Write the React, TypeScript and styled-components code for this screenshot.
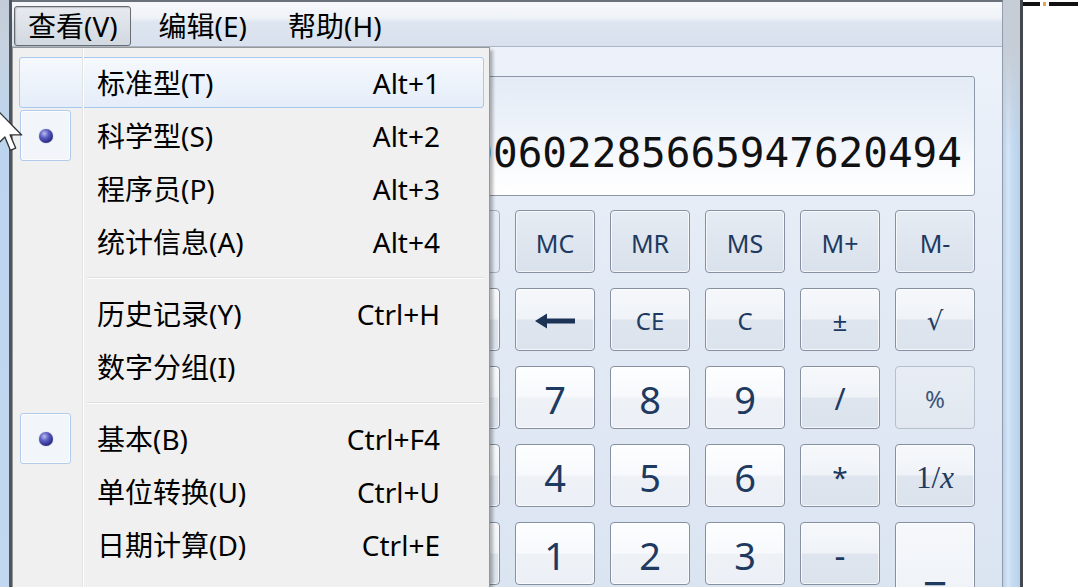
import React from "react";
import styled, { createGlobalStyle, css } from "styled-components";

const UI_FONT = `"Noto Sans", "Noto Sans CJK SC", sans-serif`;
const SERIF = `"Liberation Serif", "DejaVu Serif", serif`;
const MONO = `"DejaVu Sans Mono", "Liberation Mono", monospace`;
const SYMBOL = `"DejaVu Sans", "Noto Sans", sans-serif`;

const GlobalStyle = createGlobalStyle`
  html, body { margin: 0; padding: 0; background: #ffffff; overflow: hidden; }
  #root { width: 1078px; height: 587px; }
  * { box-sizing: border-box; }
`;

const Screen = styled.div`
  position: relative;
  width: 1078px;
  height: 587px;
  overflow: hidden;
  display: flex;
  align-items: stretch;
  font-family: ${UI_FONT};
`;

const FrameLeft = styled.div`
  flex: none;
  width: 12px;
  border-right: 3px solid #4f555d;
  background: linear-gradient(to bottom, #c3ccd8 0, #c6d2e0 46px, #bcd4ee 130px, #c1d8f0 100%);
`;

const Window = styled.div`
  flex: none;
  width: 991px;
  display: flex;
  flex-direction: column;
  border-top: 2px solid #6a717b;
  border-right: 1px solid #929dab;
`;

const MenuBar = styled.div`
  flex: none;
  height: 45px;
  display: flex;
  align-items: flex-start;
  gap: 14px;
  padding: 4px 0 0 2px;
  border-bottom: 1px solid #aab5c5;
  background: linear-gradient(to bottom, #f7f8fb 0%, #eff2f7 36%, #dde5f0 46%, #d9e1ee 100%);
`;

const MenuTitle = styled.div<{ $active?: boolean }>`
  height: 40px;
  display: flex;
  align-items: center;
  padding: 0 12px 2px 13px;
  font-size: 28px;
  color: #000;
  border: 1px solid transparent;
  border-radius: 3px;
  ${(p) =>
    p.$active &&
    css`
      border-color: #676c73;
      background: linear-gradient(to bottom, #e7eaef 0%, #dde2e9 50%, #d2d8e0 100%);
      box-shadow: inset 1px 1px 1px rgba(0, 0, 0, 0.18);
    `}
`;

const Body = styled.div`
  flex: 1;
  display: flex;
  flex-direction: column;
  gap: 14px;
  padding: 29px 27px 0 28px;
  background: linear-gradient(to bottom, #edf2fa 0%, #e2eaf5 40%, #d9e3f0 100%);
`;

const Display = styled.div`
  flex: none;
  height: 120px;
  display: flex;
  align-items: flex-end;
  justify-content: flex-end;
  overflow: hidden;
  padding: 0 12px 21px 12px;
  border: 1px solid #8c98a8;
  border-radius: 3px;
  background: linear-gradient(to bottom, #e4ebf5 0%, #eef3fa 45%, #fbfcfe 80%, #ffffff 100%);
`;

const DisplayValue = styled.div`
  flex: none;
  white-space: nowrap;
  font-family: ${MONO};
  font-size: 41px;
  line-height: 1;
  color: #111;
`;

const Keypad = styled.div`
  display: grid;
  grid-template-columns: repeat(10, 80px);
  grid-auto-rows: 63px;
  gap: 15px;
`;

const GroupBox = styled.div`
  grid-column: span 5;
  display: flex;
  align-items: center;
  justify-content: space-around;
  border: 1px solid #a6b2c3;
  border-radius: 4px;
  font-size: 24px;
  color: #000;
`;

type Variant = "mem" | "op" | "num" | "off";
type Face = "ui" | "serif" | "symbol";

const variants: Record<Variant, ReturnType<typeof css>> = {
  mem: css`
    background: linear-gradient(to bottom, #e6ecf4 0%, #dfe6ef 50%, #d9e1ec 100%);
  `,
  op: css`
    background: linear-gradient(to bottom, #f6f8fb 0%, #eff3f8 49%, #dee5ee 51%, #dbe3ed 100%);
  `,
  num: css`
    background: linear-gradient(to bottom, #fdfeff 0%, #f7f9fc 49%, #eef2f7 51%, #ecf0f6 100%);
  `,
  off: css`
    border-color: #b6c0cd;
    box-shadow: none;
    color: #3d5477;
    background: linear-gradient(to bottom, #e8edf4 0%, #e2e8f0 100%);
  `,
};

const faces: Record<Face, string> = { ui: UI_FONT, serif: SERIF, symbol: SYMBOL };

const Key = styled.div<{ $v: Variant; $size: number; $rows?: number; $cols?: number; $face?: Face; $lift?: number }>`
  display: flex;
  align-items: center;
  justify-content: center;
  padding-top: 3px;
  padding-bottom: ${(p) => p.$lift ?? 0}px;
  border: 1px solid #8690a0;
  border-radius: 4px;
  box-shadow: inset 0 0 0 1px rgba(255, 255, 255, 0.7);
  color: #1e3a60;
  font-family: ${(p) => faces[p.$face ?? "ui"]};
  font-size: ${(p) => p.$size}px;
  line-height: 1;
  white-space: nowrap;
  grid-row: span ${(p) => p.$rows ?? 1};
  grid-column: span ${(p) => p.$cols ?? 1};
  ${(p) => variants[p.$v]}
`;

const RightFrame = styled.div`
  flex: none;
  width: 20px;
  border-right: 3px solid #44484e;
  background:
    linear-gradient(to bottom, rgba(198, 205, 214, 1) 0, rgba(198, 205, 214, 1) 46px, rgba(198, 205, 214, 0) 150px),
    linear-gradient(to right, #b9d0ea 0%, #d6e6f7 30%, #c4dbf2 55%, #b8d1ec 100%);
`;

const Desktop = styled.div`
  flex: 1;
  display: flex;
  align-items: flex-start;
  gap: 3px;
  padding-top: 2px;
  background: #ffffff;
`;

const Dash = styled.div<{ $w: number; $tint?: string }>`
  flex: none;
  width: ${(p) => p.$w}px;
  height: 4px;
  background: ${(p) => p.$tint ?? "#111"};
`;

/* ---------- Dropdown (overlay) ---------- */

const DropMenu = styled.div`
  position: absolute;
  left: 12px;
  top: 47px;
  width: 478px;
  bottom: -30px;
  padding: 7px 5px 0 6px;
  background: #f0f0f0;
  border: 1px solid #979797;
  box-shadow: 3px 3px 3px rgba(0, 0, 0, 0.28);
  font-size: 28px;
  color: #000;
  z-index: 5;

  &::after {
    content: "";
    position: absolute;
    left: 69px;
    top: 0;
    bottom: 0;
    width: 1px;
    background: #e2e3e3;
    border-right: 1px solid #ffffff;
    pointer-events: none;
  }
`;

const MenuItem = styled.div<{ $hover?: boolean }>`
  height: 51px;
  margin: 2px 0 1px;
  display: grid;
  grid-template-columns: 51px 1fr auto;
  align-items: center;
  padding-right: 43px;
  border: 1px solid transparent;
  border-radius: 3px;
  ${(p) =>
    p.$hover &&
    css`
      border-color: #a9c8ee;
      background: linear-gradient(to bottom, #f6f9fd 0%, #edf3fb 50%, #e5edf9 100%);
    `}
`;

const CheckCell = styled.div<{ $checked?: boolean }>`
  align-self: stretch;
  margin: -1px 0;
  display: flex;
  align-items: center;
  justify-content: center;
  border: 1px solid transparent;
  border-radius: 3px;
  ${(p) =>
    p.$checked &&
    css`
      border-color: #b1cbec;
      background: #f2f6fb;
      box-shadow: inset 0 0 0 1px rgba(255, 255, 255, 0.8);
    `}
`;

const Bullet = styled.span`
  width: 14px;
  height: 14px;
  border-radius: 50%;
  background: radial-gradient(circle at 38% 32%, #b9bdf0 0%, #5a5cc0 35%, #2c2d8a 70%, #1c1c5c 100%);
  box-shadow: 0 0 1px rgba(20, 20, 80, 0.6);
`;

const ItemLabel = styled.span`
  padding-left: 26px;
  white-space: nowrap;
  line-height: 1;
`;

const Shortcut = styled.span`
  white-space: nowrap;
  line-height: 1;
`;

const Separator = styled.div`
  height: 18px;
  padding: 9px 0 0 68px;
`;

const SepLine = styled.div`
  height: 2px;
  border-top: 1px solid #dfdfdf;
  border-bottom: 1px solid #ffffff;
`;

const CursorSvg = styled.svg`
  position: absolute;
  left: -5px;
  top: 108px;
  z-index: 10;
`;

/* ---------- data ---------- */

type KeyDef = {
  label: React.ReactNode;
  v: Variant;
  size?: number;
  rows?: number;
  cols?: number;
  face?: Face;
  lift?: number;
};

const BackArrow = () => (
  <svg width="42" height="18" viewBox="0 0 42 18">
    <path d="M1 9 L13 1.5 L13 6.6 L41 6.6 L41 11.4 L13 11.4 L13 16.5 Z" fill="#1c3356" />
  </svg>
);

const keys: KeyDef[] = [
  { label: "MC", v: "mem", size: 25 },
  { label: "MR", v: "mem", size: 25 },
  { label: "MS", v: "mem", size: 25 },
  { label: "M+", v: "mem", size: 25 },
  { label: "M-", v: "mem", size: 25 },

  { label: "", v: "op", size: 24 },
  { label: "Inv", v: "op", size: 24 },
  { label: "ln", v: "op", size: 24 },
  { label: "(", v: "op", size: 24 },
  { label: ")", v: "op", size: 24 },
  { label: <BackArrow />, v: "op", size: 24 },
  { label: "CE", v: "op", size: 24 },
  { label: "C", v: "op", size: 24 },
  { label: "±", v: "op", size: 26 },
  { label: "√", v: "op", size: 26, face: "symbol" },

  { label: "Int", v: "op", size: 24 },
  { label: "sinh", v: "op", size: 24 },
  { label: "sin", v: "op", size: 24 },
  { label: "x²", v: "op", size: 24 },
  { label: "n!", v: "op", size: 24 },
  { label: "7", v: "num", size: 38 },
  { label: "8", v: "num", size: 38 },
  { label: "9", v: "num", size: 38 },
  { label: "/", v: "op", size: 30 },
  { label: "%", v: "off", size: 24 },

  { label: "dms", v: "op", size: 24 },
  { label: "cosh", v: "op", size: 24 },
  { label: "cos", v: "op", size: 24 },
  { label: "xʸ", v: "op", size: 24 },
  { label: "ʸ√x", v: "op", size: 24, face: "symbol" },
  { label: "4", v: "num", size: 38 },
  { label: "5", v: "num", size: 38 },
  { label: "6", v: "num", size: 38 },
  { label: "*", v: "op", size: 28 },
  {
    label: (
      <>
        1/<i>x</i>
      </>
    ),
    v: "op",
    size: 31,
    face: "serif",
  },

  { label: "π", v: "op", size: 24 },
  { label: "tanh", v: "op", size: 24 },
  { label: "tan", v: "op", size: 24 },
  { label: "x³", v: "op", size: 24 },
  { label: "∛x", v: "op", size: 24, face: "symbol" },
  { label: "1", v: "num", size: 38 },
  { label: "2", v: "num", size: 38 },
  { label: "3", v: "num", size: 38 },
  { label: "-", v: "op", size: 34 },
  { label: "=", v: "op", size: 44, rows: 2, lift: 14 },

  { label: "F-E", v: "op", size: 24 },
  { label: "Exp", v: "op", size: 24 },
  { label: "Mod", v: "op", size: 24 },
  { label: "log", v: "op", size: 24 },
  { label: "10ˣ", v: "op", size: 24 },
  { label: "0", v: "num", size: 38, cols: 2 },
  { label: ".", v: "num", size: 38 },
  { label: "+", v: "op", size: 30 },
];

type Entry =
  | { kind: "item"; label: string; shortcut?: string; checked?: boolean; hover?: boolean }
  | { kind: "sep" };

const menu: Entry[] = [
  { kind: "item", label: "标准型(T)", shortcut: "Alt+1", hover: true },
  { kind: "item", label: "科学型(S)", shortcut: "Alt+2", checked: true },
  { kind: "item", label: "程序员(P)", shortcut: "Alt+3" },
  { kind: "item", label: "统计信息(A)", shortcut: "Alt+4" },
  { kind: "sep" },
  { kind: "item", label: "历史记录(Y)", shortcut: "Ctrl+H" },
  { kind: "item", label: "数字分组(I)" },
  { kind: "sep" },
  { kind: "item", label: "基本(B)", shortcut: "Ctrl+F4", checked: true },
  { kind: "item", label: "单位转换(U)", shortcut: "Ctrl+U" },
  { kind: "item", label: "日期计算(D)", shortcut: "Ctrl+E" },
];

export default function App() {
  return (
    <>
      <GlobalStyle />
      <Screen>
        <FrameLeft />
        <Window>
          <MenuBar>
            <MenuTitle $active>查看(V)</MenuTitle>
            <MenuTitle>编辑(E)</MenuTitle>
            <MenuTitle>帮助(H)</MenuTitle>
          </MenuBar>
          <Body>
            <Display>
              <DisplayValue>1.00000000000000000000602285665947620494</DisplayValue>
            </Display>
            <Keypad>
              <GroupBox>
                <span>○ 度</span>
                <span>○ 弧度</span>
                <span>○ 梯度</span>
              </GroupBox>
              {keys.map((k, i) => (
                <Key
                  key={i}
                  $v={k.v}
                  $size={k.size ?? 24}
                  $rows={k.rows}
                  $cols={k.cols}
                  $face={k.face}
                  $lift={k.lift}
                >
                  {k.label}
                </Key>
              ))}
            </Keypad>
          </Body>
        </Window>
        <RightFrame />
        <Desktop>
          <Dash $w={17} />
          <Dash $w={3} $tint="#e3a35a" />
          <Dash $w={40} />
        </Desktop>

        <DropMenu>
          {menu.map((m, i) =>
            m.kind === "sep" ? (
              <Separator key={i}>
                <SepLine />
              </Separator>
            ) : (
              <MenuItem key={i} $hover={m.hover}>
                <CheckCell $checked={m.checked}>{m.checked && <Bullet />}</CheckCell>
                <ItemLabel>{m.label}</ItemLabel>
                <Shortcut>{m.shortcut ?? ""}</Shortcut>
              </MenuItem>
            )
          )}
        </DropMenu>

        <CursorSvg width="28" height="46" viewBox="0 0 12 20">
          <path
            d="M0.5 0.5 L0.5 16.2 L4.2 12.6 L6.6 18.4 L8.9 17.4 L6.5 11.7 L11.5 11.7 Z"
            fill="#ffffff"
            stroke="#333"
            strokeWidth="0.6"
            strokeLinejoin="round"
          />
        </CursorSvg>
      </Screen>
    </>
  );
}
